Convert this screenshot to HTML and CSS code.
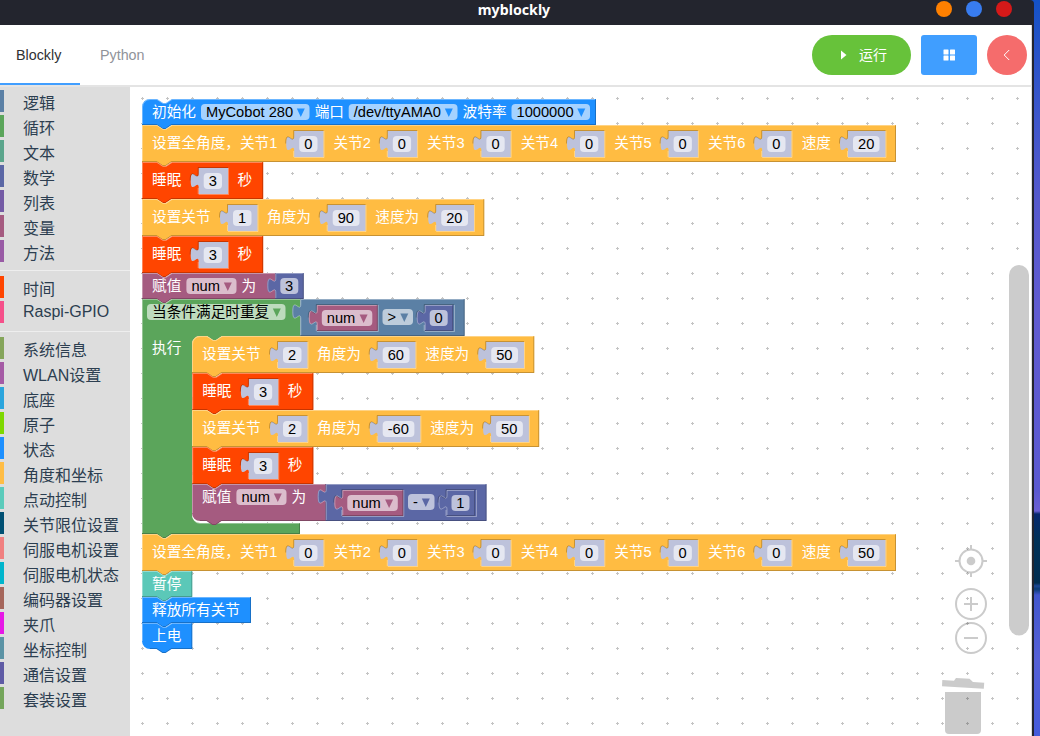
FILE: index.html
```html
<!DOCTYPE html>
<html lang="zh-CN">
<head>
<meta charset="utf-8">
<title>myblockly</title>
<link rel="stylesheet" href="styles.css">
</head>
<body>
<div class="desktop">
  <div class="window">
    <div class="titlebar">
      <h1 class="title">myblockly</h1>
      <div class="controls"><i class="dot orange"></i><i class="dot blue"></i><i class="dot red"></i></div>
    </div>
    <header class="header">
      <nav class="tabs"><a class="tab active">Blockly</a><a class="tab">Python</a></nav>
      <div class="actions">
        <button class="btn run"><svg width="14" height="14" viewBox="0 0 14 14"><path d="M5 2.500 10.500 7 5 11.500z" fill="#fff"/></svg><span>运行</span></button>
        <button class="btn menu"><svg width="14" height="14" viewBox="0 0 14 14" fill="#fff"><rect x="1.500" y="1.500" width="5" height="5" rx=".5"/><rect x="8" y="1.500" width="5" height="5" rx=".5"/><rect x="1.500" y="7.500" width="5" height="5" rx=".5"/><rect x="8" y="7.500" width="5" height="5" rx=".5"/></svg></button>
        <button class="btn back"><svg width="14" height="14" viewBox="0 0 14 14"><path d="M9.200 2 4.200 7l5 5" fill="none" stroke="#fff"/></svg></button>
      </div>
    </header>
    <main class="main">
      <aside class="toolbox">
        <div class="cat c1">逻辑</div><div class="cat c2">循环</div><div class="cat c3">文本</div><div class="cat c4">数学</div><div class="cat c5">列表</div><div class="cat c6">变量</div><div class="cat c7">方法</div>
        <hr class="sep">
        <div class="cat c8">时间</div><div class="cat c9 latin">Raspi-GPIO</div>
        <hr class="sep">
        <div class="cat c10">系统信息</div><div class="cat c11">WLAN设置</div><div class="cat c12">底座</div><div class="cat c13">原子</div><div class="cat c14">状态</div><div class="cat c15">角度和坐标</div><div class="cat c16">点动控制</div><div class="cat c17">关节限位设置</div><div class="cat c18">伺服电机设置</div><div class="cat c19">伺服电机状态</div><div class="cat c20">编码器设置</div><div class="cat c21">夹爪</div><div class="cat c22">坐标控制</div><div class="cat c23">通信设置</div><div class="cat c24">套装设置</div>
      </aside>
      <svg class="workspace" width="901" height="649" viewBox="130 87 901 649">
        <defs>
          <pattern id="grid" x="130" y="86" width="25" height="25" patternUnits="userSpaceOnUse"><path d="M11 12.500h3M12.500 11v3" stroke="#c4c4c4"/></pattern>
        </defs>
        <rect x="130" y="87" width="901" height="649" fill="url(#grid)"/>
        <g id="blocks"></g>
        <g class="tools">
          <circle cx="971" cy="561" r="11.500"/><path d="M971 545v5M971 572v5M955 561h5M982 561h5"/><circle class="solid" cx="971" cy="561" r="4.300"/>
          <circle cx="971" cy="604" r="15"/><path d="M964 604h14M971 597v14"/>
          <circle cx="971" cy="638" r="15"/><path d="M964 638h14"/>
          <path class="solid" d="M945 692h36v38q0 4-4 4h-28q-4 0-4-4zM942.300 680l11.700.7 2-2.700 13.500.7 3.500 3.300 11.200.8-.4 6-41.800-2.600z"/>
        </g>
        <rect x="1009" y="265" width="20" height="370.500" rx="10" fill="#ccc"/>
      </svg>
    </main>
  </div>
  <div class="wallpaper"></div>
</div>
<script src="blocks.js"></script>
</body>
</html>
```

FILE: styles.css
```css
* { box-sizing: border-box; }
body { margin: 0; overflow: hidden; font-family: "Liberation Sans", "Noto Sans CJK SC", sans-serif; }
.desktop { display: flex; width: 1040px; height: 736px; background: #1452c6; }
.window { display: flex; flex-direction: column; width: 1034px; background: #23252e; border-radius: 0 4px 0 0; overflow: hidden; }
.wallpaper { flex: 1; background: linear-gradient(#1452c6 0, #2a53c8 60px, #3e56cb 120px, #5559cd 200px, #605bd1 310px, #5a59d0 490px, #6a5fd4 511px, #06286e 514px, #003158 540px, #002d50 583px, #1c4796 586px, #093b72 589px, #4257cd 595px, #5560d6 660px, #445bdb 736px); }
.titlebar { display: grid; grid-template-columns: 1fr auto 1fr; height: 25px; }
.title { grid-column: 2; margin: 0; color: #fff; font: bold 14.2px/19px "Noto Sans", sans-serif; transform: translateX(-3px); }
.controls { display: flex; justify-content: flex-end; gap: 14px; padding: 1px 22px 0 0; }
.dot { width: 16px; height: 16px; border-radius: 50%; }
.dot.orange { background: #ff8000; }
.dot.blue { background: #387cf0; }
.dot.red { background: #d51919; }
.header { display: flex; justify-content: space-between; width: 1032px; height: 62px; background: #fff; border-bottom: 2px solid #e4e4e4; border-right: 1px solid #ddd; }
.tabs { display: flex; }
.tab { height: 60px; padding: 0 20px 0 16px; width: 84px; font-size: 14.3px; line-height: 60px; color: #909399; }
.tab.active { width: 80px; color: #303133; border-bottom: 2px solid #409eff; }
.tab + .tab { padding-left: 20px; }
.actions { display: flex; gap: 10px; padding: 10px 4px 0 0; }
.btn { display: flex; align-items: center; justify-content: center; height: 40px; border: 0; padding: 0; color: #fff; font: 14px "Liberation Sans", "Noto Sans CJK SC", sans-serif; }
.run { width: 99px; gap: 9px; border-radius: 20px; background: #67c23a; }
.run span { padding-bottom: 2px; }
.menu { width: 56px; border-radius: 3px; background: #409eff; }
.back { width: 40px; border-radius: 50%; background: #f56c6c; }
.main { display: flex; width: 1032px; height: 649px; background: #fff; border-right: 1px solid #ddd; }
.toolbox { display: flex; flex-direction: column; width: 130px; padding-top: 3px; background: #ddd; color: #2c3e50; flex: none; }
.cat { flex: none; height: 22px; margin-bottom: 3px; padding-left: 19px; border-left: 4px solid; font-size: 16px; line-height: 27px; white-space: nowrap; border-color: var(--c); }
.cat.latin { line-height: 22px; }
.sep { flex: none; width: 100%; height: 1px; border: 0; background: #eee; margin: 5px 0; }
.c1 { --c: #5b80a5; } .c2 { --c: #5ba55b; } .c3 { --c: #5ba58c; } .c4 { --c: #5b67a5; }
.c5 { --c: #745ba5; } .c6 { --c: #a55b80; } .c7 { --c: #995ba5; } .c8 { --c: #ff4500; }
.c9 { --c: #f5508a; } .c10 { --c: #85a55b; } .c11 { --c: #a55ba5; } .c12 { --c: #2ba5dd; }
.c13 { --c: #7ed800; } .c14 { --c: #1e90ff; } .c15 { --c: #ffbd45; } .c16 { --c: #5bcbbb; }
.c17 { --c: #005073; } .c18 { --c: #f08080; } .c19 { --c: #00b5cc; } .c20 { --c: #a5665b; }
.c21 { --c: #e619e6; } .c22 { --c: #5b93a5; } .c23 { --c: #5f5ba5; } .c24 { --c: #74a55b; }
.workspace { display: block; flex: none; }
.workspace text { font: 14.667px "Liberation Sans", "Noto Sans CJK SC", sans-serif; }
.label { fill: #fff; }
.value { fill: #000; }
.pill { fill: #fff; fill-opacity: .6; }
.light, .dark { fill: none; stroke-width: 1; }
.light { stroke: #fff; stroke-opacity: .35; }
.dark { stroke: #000; stroke-opacity: .22; }
.tools { fill: none; stroke: #000; stroke-width: 2; opacity: .2; }
.tools .solid { fill: #000; stroke: none; }
```

FILE: blocks.js
```js
const ORANGE = '#ffbc42', RED = '#ff4500', BLUE = '#1e90ff', TEAL = '#5bc8b8';
const PLUM = '#a55b80', MATH = '#5b67a5', LOGIC = '#5b80a5', LOOP = '#5ba55b', SHADOW = '#bdc2db';
const root = document.getElementById('blocks');

function add(tag, attrs, text) {
  const el = document.createElementNS('http://www.w3.org/2000/svg', tag);
  for (const k in attrs) el.setAttribute(k, attrs[k]);
  if (text) el.textContent = text;
  root.appendChild(el);
}
const path = (d, attrs) => add('path', { d, ...attrs });
const light = d => path(d, { class: 'light' });
const dark = d => path(d, { class: 'dark' });
const label = (x, y, t) => add('text', { x, y, class: 'label' }, t);
const value = (x, y, t) => add('text', { x, y, class: 'value' }, t);
const pill = (x, y, r) => add('rect', { x, y, width: r - x, height: 16, rx: 4, class: 'pill' });

// Statement block with a notch on top and a tab below.
function stack(x, y, r, h, color, opt = {}) {
  const b = y + h;
  const top = opt.roundTop ? `M${x} ${y + 8}a8 8 0 0 1 8 -8` : `M${x} ${y}`;
  const end = opt.roundBottom ? `H${x + 8}a8 8 0 0 1 -8 -8z` : `H${x}z`;
  path(`${top}H${x + 15}l6 4h3l6 -4H${r}V${b}H${x + 29.5}l-6 4h-3l-6 -4${end}`, { fill: color });
  const lt = opt.roundTop ? `M${x + .5} ${y + 8}a7.500 7.500 0 0 1 7.500 -7.500` : `M${x + .5} ${y + .5}`;
  light(`M${x + .5} ${b - (opt.roundBottom ? 8 : 1)}V${y + (opt.roundTop ? 8 : .5)}${lt}H${x + 15}l6 4h3l6 -4H${r - 1}`);
  dark(`M${r - .5} ${y + .5}V${b - .5}H${x + 29.5}l-6 4h-3l-6 -4H${x + (opt.roundBottom ? 8 : 0)}`);
}
function output(x, y, r, h, color) {
  path(`M${x} ${y}H${r}V${y + h}H${x}V${y + 20}c0 -10 -8 8 -8 -7.500s8 2.500 8 -7.500z`, { fill: color });
}
// Socket edge around a block that sits inside another.
function socket(x, y, r, h) {
  dark(`M${r} ${y - .5}H${x - .5}V${y + 5}c0 10 -8 -8 -8 7.500`);
  light(`M${x - .5} ${y + 20}V${y + h}M${x} ${y + h + .5}H${r + .5}V${y}`);
}
function number(x, y, r, t) {
  output(x + .7, y + 6, r, 26, SHADOW);
  socket(x + .7, y + 6, r, 26);
  pill(x + 5.7, y + 11, r - 6);
  value(x + 10.7, y + 24, t);
}
function arrow(cx, y, color) {
  path(`M${cx - 4} ${y - 8.5}h8l-4 8.500z`, { fill: color });
}
function dropdown(x, base, r, t, color) {
  pill(x, base - 13, r);
  value(x + 5, base, t);
  arrow(r - 8.7, base, color);
}

function initialise(y) {
  stack(142, y, 596, 26, BLUE, { roundTop: true });
  label(152, y + 18, '初始化');
  dropdown(201, y + 18, 309.5, 'MyCobot 280', BLUE);
  label(314.7, y + 18, '端口');
  dropdown(348.7, y + 18, 457.5, '/dev/ttyAMA0', BLUE);
  label(462.6, y + 18, '波特率');
  dropdown(511.5, y + 18, 590, '1000000', BLUE);
}
function allAngles(y, speed) {
  stack(142, y, 896, 37, ORANGE);
  label(152, y + 23, '设置全角度，关节1');
  for (let i = 0; i < 6; i++) {
    const x = 293.5 + i * 93.6;
    if (i) label(x - 53.6, y + 23, '关节' + (i + 1));
    number(x, y, x + 30, '0');
  }
  label(801.7, y + 23, '速度');
  number(847.3, y, 885.5, speed);
}
function sleep(x, y) {
  stack(x, y, x + 121.2, 37, RED);
  label(x + 10, y + 23, '睡眠');
  number(x + 56, y, x + 86, '3');
  label(x + 95.5, y + 23, '秒');
}
function setJoint(x, y, joint, angle, speed, opt) {
  const w = angle.length > 2 ? 4.9 : 0;
  stack(x, y, x + 342.3 + w, 37, ORANGE, opt);
  label(x + 10, y + 23, '设置关节');
  number(x + 85.3, y, x + 115.5, joint);
  label(x + 125, y + 23, '角度为');
  number(x + 185, y, x + 223.5 + w, angle);
  label(x + 233.3 + w, y + 23, '速度为');
  number(x + 293.5 + w, y, x + 332 + w, speed);
}
function assign(x, y, h, opt) {
  stack(x, y, x + 134, h, PLUM, opt);
  label(x + 10, y + 18, '赋值');
  dropdown(x + 44.4, y + 18, x + 94.5, 'num', PLUM);
  label(x + 99.5, y + 18, '为');
}
function outputEdges(x, y, r, h) {
  light(`M${x + .5} ${y + h - 1}V${y + 20}c0 -10 -8 8 -8 -7.500s8 2.500 8 -7.500V${y + .5}H${r - 1}`);
  dark(`M${r - .5} ${y + .5}V${y + h - .5}H${x}`);
}
function variable(x, y) {
  output(x, y + 6, x + 61, 26, PLUM);
  socket(x, y + 6, x + 61, 26);
  outputEdges(x, y + 6, x + 61, 26);
  dropdown(x + 5, y + 24, x + 55.5, 'num', PLUM);
}
function mathNumber(x, y, t) {
  output(x, y, x + 28.5, 26, MATH);
  outputEdges(x, y, x + 28.5, 26);
  pill(x + 5, y + 5, x + 23);
  value(x + 9.7, y + 18, t);
}

initialise(99);
allAngles(125, '20');
sleep(142, 162);
setJoint(142, 199, '1', '90', '20');
sleep(142, 236);
assign(142, 273, 26);
mathNumber(275.3, 273, '3');

path('M142 299h15l6 4h3l6 -4H300.500V336H222l-6 4h-3l-6 -4H200a8 8 0 0 0 -8 8V515a8 8 0 0 0 8 8H300V534H171.500l-6 4h-3l-6 -4H142z', { fill: LOOP });
light('M142.500 533V299.500H157l6 4h3l6 -4H300M192.500 516q1 7 7.500 7.500H299.500');
dark('M299.500 523.500V533.500H171.500l-6 4h-3l-6 -4H142');
dropdown(147, 317, 285.5, '当条件满足时重复', LOOP);
label(152, 353, '执行');

output(300.3, 299, 464.7, 37, LOGIC);
outputEdges(300.3, 299, 464.7, 37);
variable(316.8, 299);
dropdown(382.5, 322, 413, '>', LOGIC);
mathNumber(424.7, 305, '0');
socket(424.7, 305, 454, 26);

setJoint(192, 336, '2', '60', '50', { roundTop: true });
sleep(192.2, 373);
setJoint(192, 410, '2', '-60', '50');
sleep(192.2, 447);
assign(192, 484, 37, { roundBottom: true });
output(325.7, 484, 486.6, 37, MATH);
outputEdges(325.7, 484, 486.6, 37);
variable(342.3, 484);
dropdown(408, 507, 434.5, '-', MATH);
mathNumber(446.5, 490, '1');
socket(446.5, 490, 476, 26);

allAngles(534, '50');
stack(142, 571, 192.3, 26, TEAL);
label(152, 589, '暂停');
stack(142, 597, 251, 26, BLUE);
label(152, 615, '释放所有关节');
stack(142, 623, 192.3, 26, BLUE, { roundBottom: true });
label(152, 641, '上电');
```
